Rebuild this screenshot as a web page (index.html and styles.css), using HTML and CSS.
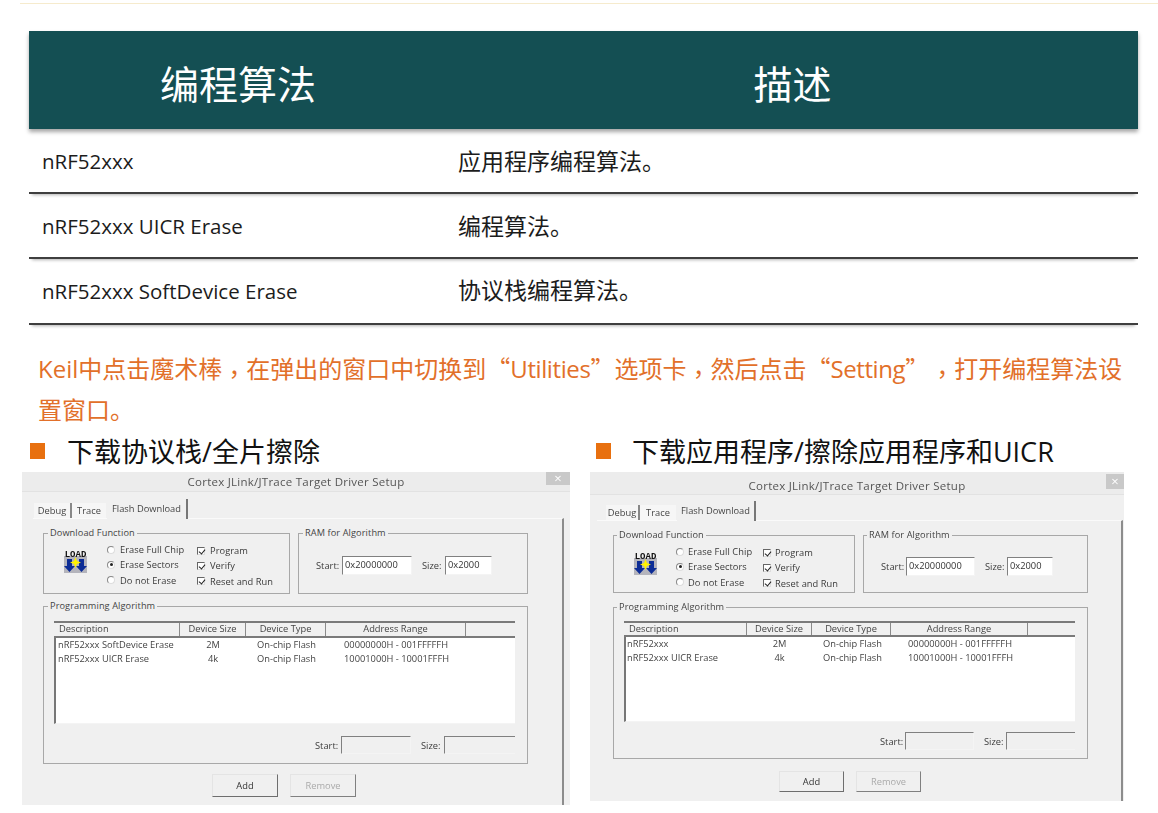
FILE: index.html
```html
<!DOCTYPE html>
<html lang="zh-CN">
<head>
<meta charset="utf-8">
<title>编程算法</title>
<link rel="stylesheet" href="styles.css">
</head>
<body>
<main class="page">
  <div class="topline"></div>
  <section class="spec">
    <div class="spec-head"><div>编程算法</div><div>描述</div></div>
    <div class="spec-row"><div class="spec-name">nRF52xxx</div><div class="spec-desc">应用程序编程算法。</div></div>
    <div class="spec-row"><div class="spec-name">nRF52xxx UICR Erase</div><div class="spec-desc">编程算法。</div></div>
    <div class="spec-row"><div class="spec-name">nRF52xxx SoftDevice Erase</div><div class="spec-desc">协议栈编程算法。</div></div>
  </section>
  <p class="note"><span class="note-line">Keil中点击魔术棒<span class="comma" lang="zh-TW">，</span>在弹出的窗口中切换到<span class="cn">“</span><span class="latin">Utilities</span><span class="cn">”</span>选项卡<span class="comma" lang="zh-TW">，</span>然后点击<span class="cn">“</span><span class="latin">Setting</span><span class="cn">”</span><span class="comma comma-gap" lang="zh-TW">，</span>打开编程算法设</span><span class="note-line">置窗口。</span></p>
  <div class="columns">
    <section class="col col-left">
      <h2 class="bullet">下载协议栈/全片擦除</h2>
      <div class="dialog">
        <div class="titlebar">Cortex JLink/JTrace Target Driver Setup<span class="close">×</span></div>
        <div class="tabs"><span class="tab">Debug</span><span class="tab tab-trace">Trace</span><span class="tab tab-active">Flash Download</span></div>
        <div class="panel">
          <div class="top-groups">
            <div class="group group-fn">
              <span class="legend">Download Function</span>
              <svg class="load" viewBox="0 0 23 24"><rect y="7" width="23" height="17" fill="#b4b4bc"/><text x="11.5" y="8" text-anchor="middle" class="load-text">LOAD</text><path d="M3 10h5v7h3l-5.500 6-5.500-6h3zM15 10h5v7h3l-5.500 6-5.500-6h3z" fill="#0c2c96"/><path d="M11.500 8l1.500 4 4 1.500-4 1.500-1.500 4-1.500-4-4-1.500 4-1.500z" fill="#fff200"/></svg>
              <div class="opts radios">
                <label class="opt"><i class="radio"></i>Erase Full Chip</label>
                <label class="opt"><i class="radio radio-on"></i>Erase Sectors</label>
                <label class="opt"><i class="radio"></i>Do not Erase</label>
              </div>
              <div class="opts checks">
                <label class="opt"><i class="check"></i>Program</label>
                <label class="opt"><i class="check"></i>Verify</label>
                <label class="opt"><i class="check"></i>Reset and Run</label>
              </div>
            </div>
            <div class="group group-ram">
              <span class="legend">RAM for Algorithm</span>
              <div class="fields">
                <span class="lbl lbl-start">Start:</span><span class="input input-start">0x20000000</span>
                <span class="lbl lbl-size">Size:</span><span class="input input-size">0x2000</span>
              </div>
            </div>
          </div>
          <div class="group group-prog">
            <span class="legend">Programming Algorithm</span>
            <div class="list">
              <div class="list-head"><span>Description</span><span>Device Size</span><span>Device Type</span><span>Address Range</span><span></span></div>
              <div class="list-row"><span>nRF52xxx SoftDevice Erase</span><span>2M</span><span>On-chip Flash</span><span>00000000H - 001FFFFFH</span></div>
              <div class="list-row"><span>nRF52xxx UICR Erase</span><span>4k</span><span>On-chip Flash</span><span>10001000H - 10001FFFH</span></div>
            </div>
            <div class="fields fields-foot">
              <span class="lbl lbl-start">Start:</span><span class="input input-start input-off"></span>
              <span class="lbl lbl-size">Size:</span><span class="input input-wide input-off"></span>
            </div>
          </div>
          <div class="buttons"><span class="btn">Add</span><span class="btn btn-off">Remove</span></div>
        </div>
      </div>
    </section>
    <section class="col col-right">
      <h2 class="bullet">下载应用程序/擦除应用程序和UICR</h2>
      <div class="dialog">
        <div class="titlebar">Cortex JLink/JTrace Target Driver Setup<span class="close">×</span></div>
        <div class="tabs"><span class="tab">Debug</span><span class="tab tab-trace">Trace</span><span class="tab tab-active">Flash Download</span></div>
        <div class="panel">
          <div class="top-groups">
            <div class="group group-fn">
              <span class="legend">Download Function</span>
              <svg class="load" viewBox="0 0 23 24"><rect y="7" width="23" height="17" fill="#b4b4bc"/><text x="11.500" y="8" text-anchor="middle" class="load-text">LOAD</text><path d="M3 10h5v7h3l-5.500 6-5.500-6h3zM15 10h5v7h3l-5.500 6-5.500-6h3z" fill="#0c2c96"/><path d="M11.500 8l1.500 4 4 1.500-4 1.500-1.500 4-1.500-4-4-1.500 4-1.500z" fill="#fff200"/></svg>
              <div class="opts radios">
                <label class="opt"><i class="radio"></i>Erase Full Chip</label>
                <label class="opt"><i class="radio radio-on"></i>Erase Sectors</label>
                <label class="opt"><i class="radio"></i>Do not Erase</label>
              </div>
              <div class="opts checks">
                <label class="opt"><i class="check"></i>Program</label>
                <label class="opt"><i class="check"></i>Verify</label>
                <label class="opt"><i class="check"></i>Reset and Run</label>
              </div>
            </div>
            <div class="group group-ram">
              <span class="legend">RAM for Algorithm</span>
              <div class="fields">
                <span class="lbl lbl-start">Start:</span><span class="input input-start">0x20000000</span>
                <span class="lbl lbl-size">Size:</span><span class="input input-size">0x2000</span>
              </div>
            </div>
          </div>
          <div class="group group-prog">
            <span class="legend">Programming Algorithm</span>
            <div class="list">
              <div class="list-head"><span>Description</span><span>Device Size</span><span>Device Type</span><span>Address Range</span><span></span></div>
              <div class="list-row"><span>nRF52xxx</span><span>2M</span><span>On-chip Flash</span><span>00000000H - 001FFFFFH</span></div>
              <div class="list-row"><span>nRF52xxx UICR Erase</span><span>4k</span><span>On-chip Flash</span><span>10001000H - 10001FFFH</span></div>
            </div>
            <div class="fields fields-foot">
              <span class="lbl lbl-start">Start:</span><span class="input input-start input-off"></span>
              <span class="lbl lbl-size">Size:</span><span class="input input-wide input-off"></span>
            </div>
          </div>
          <div class="buttons"><span class="btn">Add</span><span class="btn btn-off">Remove</span></div>
        </div>
      </div>
    </section>
  </div>
</main>
</body>
</html>
```

FILE: styles.css
```css
* { box-sizing: border-box; }
html, body { margin: 0; background: #fff; }
body { font-family: "Open Sans", "Noto Sans CJK SC", sans-serif; }
.page { width: 1158px; height: 813px; overflow: hidden; }

.topline { height: 1px; margin: 3px 0 0 20px; background: #f6ebcd; }

.spec { width: 1109px; margin: 27px 0 0 29px; }
.spec-head {
  display: grid; grid-template-columns: 418px 691px; height: 98px;
  background: #144f53; color: #fff; font-size: 39px; font-weight: 400; line-height: 105px;
  text-align: center; box-shadow: 0 3px 4px rgba(0,0,0,.35);
}
.spec-row {
  display: grid; grid-template-columns: 418px 691px; align-items: center;
  height: 65px; padding-bottom: 2px; border-bottom: 2px solid #3f3f3f;
  box-shadow: 0 4px 3px -3px rgba(0,0,0,.3); color: #1c1c1c;
}
.spec-row:last-child { height: 66px; padding-bottom: 4px; }
.spec-name { padding: 3px 0 0 13px; font-size: 20.5px; font-weight: 500; }
.spec-desc { padding-left: 11px; font-size: 23px; font-weight: 400; }

.note {
  width: 1088px; height: 85px; margin: 22px 0 0 38px; color: #e2702a;
  font-size: 24px; line-height: 42px;
}
.note-line { display: block; height: 42px; white-space: nowrap; }
.cn { font-family: "Noto Sans CJK SC", sans-serif; }
.latin { letter-spacing: -.4px; }
.comma { position: relative; top: 5px; font-family: "Noto Sans CJK TC", sans-serif; }
.comma-gap { margin-left: 13px; }

.columns { display: flex; gap: 20px; margin: 2px 0 0 22px; align-items: flex-start; }
.bullet {
  display: flex; align-items: center; gap: 22px; height: 38px; margin: 0; padding-bottom: 5px;
  font-size: 27px; font-weight: 400; color: #111;
}
.bullet::before { content: ""; width: 15px; height: 16px; background: #e8700f; }
.col-left { width: 548px; }
.col-left .bullet { padding-left: 8px; }
.col-right { width: 534px; }
.col-right .bullet { padding-left: 6px; gap: 21px; }

/* dialog metrics */
.col-left {
  --title-h: 20px; --title-lh: 20px; --panel-x: 11px; --tabs-x: 12px; --tabs-h: 27px; --tabs-pad: 7px;
  --tab-1: 38px; --tab-2: 34px; --tab-3: 81px;
  --close-w: 24px; --close-h: 13px; --close-top: 0px;
  --group-x: 10px; --fn-w: 247px; --ram-w: 230px; --top-h: 61px; --leg-x: 4px;
  --prog-w: 485px; --prog-h: 158px; --prog-gap: 12px; --list-w: 461px; --list-h: 103px;
  --list-top: 14px; --head-h: 17px; --foot-gap: 12px; --cols: 126px 66px 80px 140px 1fr;
  --addr-pad: 18px; --btn-x: 179px; --btn-w: 66px; --btn-h: 23px; --btn-top: 10px;
  --input-w: 70px; --size-w: 47px; --wide-w: 71px; --start-lbl: 26px; --size-lbl: 23px;
  --ram-pad: 17px; --ram-top: 22px; --dialog-h: 333px; --right-border: 6px;
  --lbl-col: 90px; --load-gap: 20px; --opt-gap: 5px; --row-pad: 4px;
}
.col-right {
  --title-h: 23px; --title-lh: 27px; --panel-x: 7px; --tabs-x: 16px; --tabs-h: 26px; --tabs-pad: 8px;
  --tab-1: 34px; --tab-2: 36px; --tab-3: 79px;
  --close-w: 18px; --close-h: 15px; --close-top: 2px;
  --group-x: 16px; --fn-w: 242px; --ram-w: 225px; --top-h: 58px; --leg-x: 3px;
  --prog-w: 475px; --prog-h: 152px; --prog-gap: 14px; --list-w: 451px; --list-h: 101px;
  --list-top: 13px; --head-h: 16px; --foot-gap: 10px; --cols: 123px 65px 79px 137px 1fr;
  --addr-pad: 17px; --btn-x: 182px; --btn-w: 65px; --btn-h: 21px; --btn-top: 12px;
  --input-w: 69px; --size-w: 46px; --wide-w: 69px; --start-lbl: 25px; --size-lbl: 22px;
  --ram-pad: 17px; --ram-top: 21px; --dialog-h: 329px; --right-border: 1px;
  --lbl-col: 87px; --load-gap: 19px; --opt-gap: 4px; --row-pad: 3px;
}

.dialog {
  display: flex; flex-direction: column; height: var(--dialog-h);
  background: #f0f0f0; color: #3a3a3a; font-size: 9.3px; filter: blur(.3px);
}
.titlebar {
  position: relative; height: var(--title-h); flex: none; background: #ececec;
  border-bottom: 1px solid #e2e2e2; text-align: center; line-height: var(--title-lh);
  font-size: 11.5px; color: #555; letter-spacing: .25px;
}
.close {
  position: absolute; top: var(--close-top); right: 0; width: var(--close-w); height: var(--close-h);
  background: #c9c9c9; color: #fff; line-height: var(--close-h); font-size: 13px; letter-spacing: 0;
}
.tabs {
  display: flex; align-items: flex-end; flex: none; height: var(--tabs-h);
  margin-left: var(--tabs-x); padding-top: var(--tabs-pad); margin-bottom: -1px;
}
.tab {
  width: var(--tab-1); height: 16px; text-align: center; line-height: 15px;
  background: #f6f6f6; border-right: 2px solid #888; color: #444;
}
.tab-trace { width: var(--tab-2); border-right: 0; }
.tab-active {
  position: relative; width: var(--tab-3); height: 20px; margin-left: 1px; background: #f0f0f0;
  border-right: 2px solid #777; line-height: 20px;
}
.panel {
  flex: 1; margin-left: var(--panel-x); margin-right: var(--right-border);
  padding: 14px 0 0 var(--group-x); border-top: 1px solid #fafafa;
  border-right: 2px solid #8d8d8d;
}
.top-groups { display: flex; gap: 8px; }
.group { position: relative; border: 1px solid #a8a8a8; }
.legend {
  position: absolute; top: -8px; left: var(--leg-x); padding: 0 2px; background: #f0f0f0;
  line-height: 13px; font-size: 9.2px; color: #444; letter-spacing: .1px;
}
.group-fn {
  display: flex; width: var(--fn-w); height: var(--top-h); padding: 8px 0 0 20px;
}
.load { flex: none; width: 23px; height: 24px; margin: 7px var(--load-gap) 0 0; }
.load-text { font: 700 9px "Liberation Mono", monospace; fill: #111; }
.opts { display: flex; flex-direction: column; width: var(--lbl-col); }
.opt { display: flex; align-items: center; gap: var(--opt-gap); height: 15.300px; white-space: nowrap; letter-spacing: .05px; }
.checks { padding-top: 1px; }
.radio {
  position: relative; flex: none; width: 8px; height: 8px; border-radius: 50%;
  background: #fff; border: 1px solid #9a9a9a; border-color: #888 #ddd #ddd #888;
}
.radio-on::after {
  content: ""; position: absolute; top: 1.500px; left: 1.500px; width: 3px; height: 3px;
  border-radius: 50%; background: #222;
}
.check {
  position: relative; flex: none; width: 8px; height: 8px; background: #fff;
  border: 1px solid #777; border-color: #666 #ddd #ddd #666;
}
.check::after {
  content: ""; position: absolute; top: 0; left: 1.500px; width: 3px; height: 5px;
  border: solid #222; border-width: 0 1.500px 1.500px 0; transform: rotate(40deg);
}
.group-ram { width: var(--ram-w); height: var(--top-h); padding: var(--ram-top) 0 0 var(--ram-pad); }
.fields { display: flex; align-items: center; }
.lbl { text-align: left; white-space: nowrap; }
.lbl-start { width: var(--start-lbl); }
.lbl-size { width: var(--size-lbl); margin-left: 10px; }
.input {
  height: 19px; padding-left: 2px; background: #fff; color: #333; line-height: 15px;
  border: 1px solid; border-color: #808080 #f4f4f4 #f4f4f4 #808080;
}
.input-start { width: var(--input-w); }
.input-size { width: var(--size-w); }
.input-wide { width: var(--wide-w); border-right: 0; }
.input-off { height: 18px; background: #f0f0f0; }

.group-prog {
  width: var(--prog-w); height: var(--prog-h); margin-top: var(--prog-gap);
  padding: var(--list-top) 0 0 10px;
}
.list {
  width: var(--list-w); height: var(--list-h); background: #fff;
  border-left: 2px solid #777; border-bottom: 1px solid #f4f4f4;
}
.list-head, .list-row { display: grid; grid-template-columns: var(--cols); }
.list-head {
  height: var(--head-h); margin-left: -2px; background: #f0f0f0; line-height: 12px; text-align: center;
  border-top: 2px solid #7a7a7a; border-bottom: 2px solid #7a7a7a; color: #444;
}
.list-head span { border-right: 1px solid #8a8a8a; }
.list-head span:first-child { text-align: left; padding-left: 5px; }
.list-head span:last-child { border-right: 0; }
.list-row { margin-left: -2px; height: 14px; line-height: 14px; color: #444; white-space: nowrap; }
.list-row span:nth-child(1) { padding-left: var(--row-pad); }
.list-row span:nth-child(2) { text-align: center; }
.list-row span:nth-child(3) { padding-left: 11px; }
.list-row span:nth-child(4) { padding-left: var(--addr-pad); }
.fields-foot { justify-content: flex-end; width: var(--list-w); margin-top: var(--foot-gap); }

.buttons { display: flex; gap: 12px; margin: var(--btn-top) 0 0 calc(var(--btn-x) - var(--group-x)); }
.btn {
  width: var(--btn-w); height: var(--btn-h); text-align: center; line-height: calc(var(--btn-h) - 2px);
  background: #f0f0f0; border: 1px solid; border-color: #e4e4e4 #6e6e6e #6e6e6e #e4e4e4;
  color: #333;
}
.btn-off { color: #aaa; border-color: #e4e4e4 #808080 #808080 #e4e4e4; }
```
